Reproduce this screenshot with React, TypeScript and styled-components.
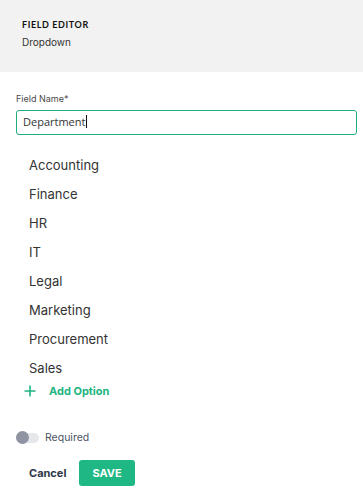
import React from 'react'
import styled, { createGlobalStyle } from 'styled-components'

const GlobalStyle = createGlobalStyle`
  body {
    margin: 0;
    background: #ffffff;
    font-family: Inter, "Liberation Sans", sans-serif;
  }
`

const Panel = styled.div`
  width: 363px;
  display: flex;
  flex-direction: column;
`

const Header = styled.header`
  height: 72px;
  box-sizing: border-box;
  padding: 19px 22px 0;
  background: #f2f2f2;
`

const Title = styled.h1`
  margin: 0;
  font-family: Lato, "Liberation Sans", sans-serif;
  font-weight: 700;
  font-size: 9px;
  line-height: 12px;
  letter-spacing: 0.6px;
  color: #111111;
`

const Subtitle = styled.div`
  margin-top: 3.5px;
  font-size: 10px;
  line-height: 14px;
  color: #333333;
`

const Form = styled.div`
  display: flex;
  flex-direction: column;
  padding: 21px 6px 0 16px;
`

const Label = styled.label`
  font-size: 9px;
  line-height: 12px;
  color: #4a4a4a;
`

const TextBox = styled.div`
  margin-top: 5px;
  height: 24.5px;
  box-sizing: border-box;
  display: flex;
  align-items: center;
  padding: 0 6px 1px;
  border: 1px solid #1fae7c;
  border-radius: 3px;
  font-family: "Open Sans", "Liberation Sans", sans-serif;
  font-size: 11px;
  color: #333333;
`

const Caret = styled.span`
  display: inline-block;
  width: 1px;
  height: 13px;
  margin-left: 0.5px;
  background: #111111;
`

const OptionList = styled.ul`
  list-style: none;
  margin: 16px 0 0;
  padding: 0 0 0 13px;
`

const OptionItem = styled.li`
  font-size: 13px;
  line-height: 29px;
  color: #333333;
`

const AddOption = styled.button`
  display: flex;
  align-items: center;
  gap: 13px;
  height: 16px;
  margin: 0;
  padding: 0 0 0 8px;
  border: none;
  background: none;
  font-family: Inter, "Liberation Sans", sans-serif;
  font-weight: 700;
  font-size: 11px;
  color: #21b47f;
  cursor: pointer;
`

const ToggleRow = styled.div`
  display: flex;
  align-items: center;
  gap: 6px;
  height: 13px;
  margin-top: 32.5px;
`

const Track = styled.span<{ on?: boolean }>`
  position: relative;
  width: 23px;
  height: 10px;
  border-radius: 5px;
  background: ${(p) => (p.on ? '#a7e3cb' : '#e5e7eb')};
`

const Knob = styled.span<{ on?: boolean }>`
  position: absolute;
  top: -1.5px;
  left: ${(p) => (p.on ? '10px' : '0')};
  width: 13px;
  height: 13px;
  border-radius: 50%;
  background: ${(p) => (p.on ? '#21b47f' : '#8e94a2')};
`

const ToggleLabel = styled.span`
  font-size: 10.5px;
  color: #4b5563;
`

const Actions = styled.div`
  display: flex;
  margin-top: 16px;
`

const ActionButton = styled.button<{ primary?: boolean }>`
  height: 26px;
  padding: 0 13px;
  border: none;
  border-radius: 3px;
  font-family: Inter, "Liberation Sans", sans-serif;
  font-weight: 700;
  font-size: 11px;
  background: ${(p) => (p.primary ? '#1fb884' : 'transparent')};
  color: ${(p) => (p.primary ? '#ffffff' : '#2d3748')};
  cursor: pointer;
`

const PlusIcon = () => (
  <svg width="12" height="12" viewBox="0 0 12 12" fill="none">
    <path d="M6 0.5v11M0.5 6h11" stroke="#21b47f" strokeWidth="1.6" />
  </svg>
)

const options = ['Accounting', 'Finance', 'HR', 'IT', 'Legal', 'Marketing', 'Procurement', 'Sales']

export default function App() {
  return (
    <Panel>
      <GlobalStyle />
      <Header>
        <Title>FIELD EDITOR</Title>
        <Subtitle>Dropdown</Subtitle>
      </Header>
      <Form>
        <Label>Field Name*</Label>
        <TextBox>
          Department
          <Caret />
        </TextBox>
        <OptionList>
          {options.map((o) => (
            <OptionItem key={o}>{o}</OptionItem>
          ))}
        </OptionList>
        <AddOption>
          <PlusIcon />
          Add Option
        </AddOption>
        <ToggleRow>
          <Track>
            <Knob />
          </Track>
          <ToggleLabel>Required</ToggleLabel>
        </ToggleRow>
        <Actions>
          <ActionButton>Cancel</ActionButton>
          <ActionButton primary>SAVE</ActionButton>
        </Actions>
      </Form>
    </Panel>
  )
}
